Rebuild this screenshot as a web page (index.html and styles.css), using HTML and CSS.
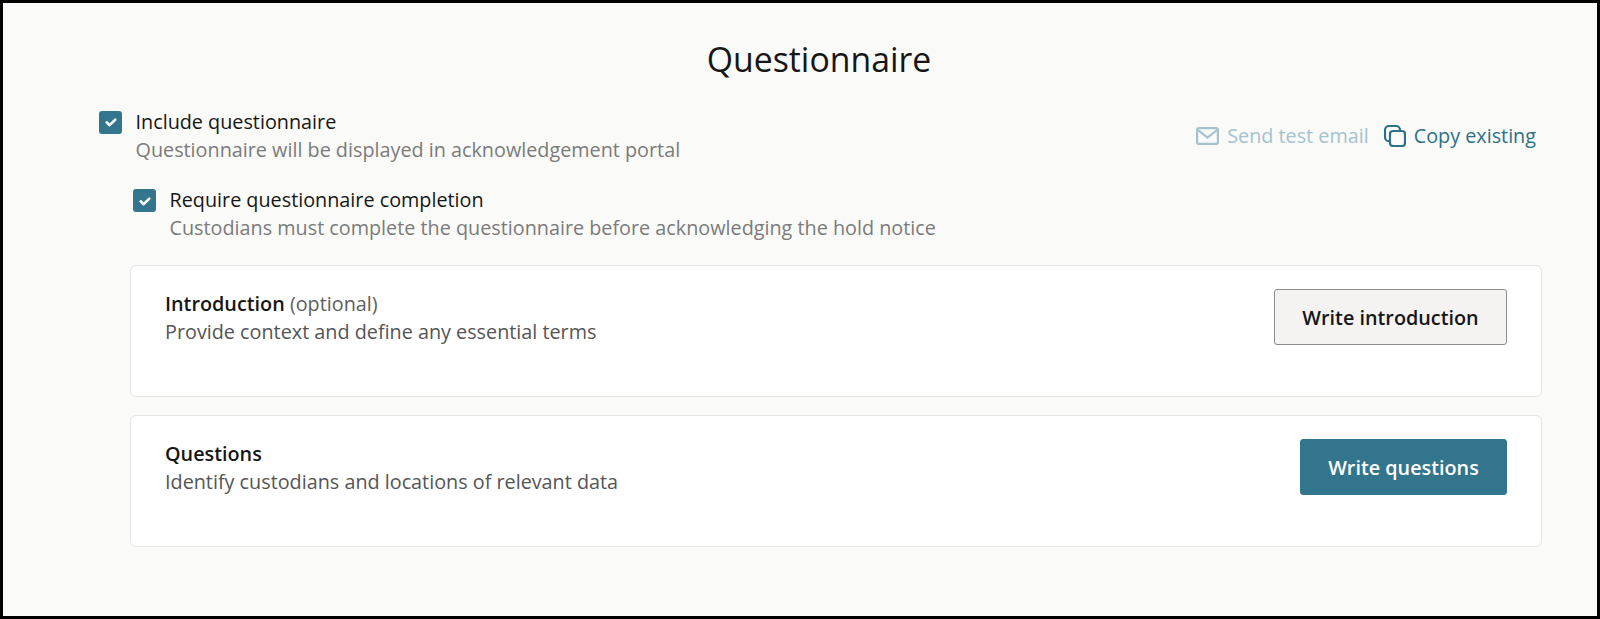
FILE: index.html
```html
<!DOCTYPE html>
<html lang="en">
<head>
<meta charset="utf-8">
<title>Questionnaire</title>
<link rel="stylesheet" href="styles.css">
</head>
<body>
<main class="frame">
  <h1 class="title">Questionnaire</h1>
  <section class="top-row">
    <div class="check-row">
      <span class="checkbox"><svg viewBox="0 0 22 22" width="22" height="22"><path d="M6.700 11.300l3 2.900 5.600-5.600" fill="none" stroke="#fff" stroke-width="2.600" stroke-linecap="round" stroke-linejoin="round"/></svg></span>
      <div>
        <div class="check-label">Include questionnaire</div>
        <div class="check-help">Questionnaire will be displayed in acknowledgement portal</div>
      </div>
    </div>
    <div class="actions">
      <span class="action action-disabled">
        <svg viewBox="0 0 23 18" width="23" height="18"><rect x="1.100" y="1.100" width="20.800" height="15.800" rx="2" fill="none" stroke="currentColor" stroke-width="2.200"/><path d="M2 3l9.500 7.500L21 3" fill="none" stroke="currentColor" stroke-width="2.200"/></svg>
        Send test email
      </span>
      <span class="action">
        <svg viewBox="0 0 22 22" width="22" height="22"><path d="M5 16.200A4 4 0 0 1 1 12.200V5A4 4 0 0 1 5 1H12A4 4 0 0 1 16 5" fill="none" stroke="currentColor" stroke-width="2.200"/><rect x="6" y="6" width="15" height="15" rx="3" fill="none" stroke="currentColor" stroke-width="2.200"/></svg>
        Copy existing
      </span>
    </div>
  </section>
  <section class="check-row nested">
    <span class="checkbox"><svg viewBox="0 0 22 22" width="22" height="22"><path d="M6.700 11.300l3 2.900 5.600-5.600" fill="none" stroke="#fff" stroke-width="2.600" stroke-linecap="round" stroke-linejoin="round"/></svg></span>
    <div>
      <div class="check-label">Require questionnaire completion</div>
      <div class="check-help">Custodians must complete the questionnaire before acknowledging the hold notice</div>
    </div>
  </section>
  <section class="card">
    <div>
      <div class="card-title"><strong>Introduction</strong> <span class="optional">(optional)</span></div>
      <div class="card-text">Provide context and define any essential terms</div>
    </div>
    <button class="btn btn-secondary" type="button">Write introduction</button>
  </section>
  <section class="card">
    <div>
      <div class="card-title"><strong>Questions</strong></div>
      <div class="card-text">Identify custodians and locations of relevant data</div>
    </div>
    <button class="btn btn-primary" type="button">Write questions</button>
  </section>
</main>
</body>
</html>
```
FILE: styles.css
```css
* { box-sizing: border-box; }
html, body { margin: 0; height: 100%; }
body { font-family: "Open Sans", "Liberation Sans", sans-serif; color: #161616; }
.frame {
  width: 1600px;
  height: 619px;
  border: 3px solid #000;
  background: #fafaf8;
  padding: 0 52px 0 96px;
  overflow: hidden;
}
.title {
  margin: 0;
  padding: 31px 6px 0 0;
  height: 102px;
  font-size: 33.8px;
  line-height: 50px;
  font-weight: 400;
  text-align: center;
  color: #161616;
}
.top-row { display: flex; justify-content: space-between; align-items: center; height: 60px; }
.check-row { display: flex; align-items: flex-start; gap: 13.5px; }
.checkbox {
  flex: none;
  width: 23px;
  height: 23px;
  margin-top: 4px;
  border-radius: 3px;
  background: #33758c;
  display: flex;
  align-items: center;
  justify-content: center;
}
.check-label { font-size: 19.8px; line-height: 29px; color: #161616; }
.check-help { font-size: 19.8px; line-height: 28px; color: #7b7b7b; }
.nested { margin: 20px 0 0 34px; }
.actions { display: flex; gap: 15px; align-items: center; margin-right: 9px; margin-top: 2px; }
.action { display: inline-flex; align-items: center; gap: 8px; font-size: 19.8px; line-height: 28px; color: #2d7088; }
.action-disabled { color: #a3c3ce; }
.card {
  margin: 23px 0 0 31px;
  width: 1412px;
  height: 132px;
  background: #fff;
  border: 1px solid #e6e6e4;
  border-radius: 6px;
  padding: 23px 34px 0 34px;
  display: flex;
  justify-content: space-between;
  align-items: flex-start;
}
.card + .card { margin-top: 18px; }
.card-title { font-size: 19.8px; line-height: 28px; margin-top: 1px; }
.card-title strong { font-weight: 600; color: #161616; }
.optional { color: #5e5e5e; }
.card-text { font-size: 19.8px; line-height: 28px; color: #555; }
.btn {
  font-family: inherit;
  font-size: 19.8px;
  font-weight: 600;
  height: 56px;
  padding: 0;
  border-radius: 3px;
  cursor: pointer;
}
.btn-secondary { width: 233px; background: #f4f3f2; border: 1px solid #8c8c8a; color: #161616; }
.btn-primary { width: 207px; background: #33758c; border: 1px solid #33758c; color: #fff; }
```
